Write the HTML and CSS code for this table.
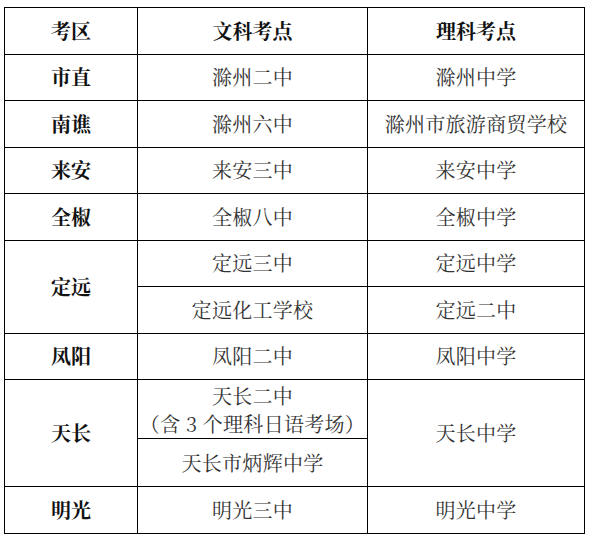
FILE: index.html
```html
<!DOCTYPE html>
<html lang="zh">
<head>
<meta charset="utf-8">
<link rel="stylesheet" href="styles.css">
</head>
<body>
<table class="grid">
  <colgroup>
    <col class="c1"><col class="c2"><col class="c3">
  </colgroup>
  <tr class="r"><th>考区</th><th>文科考点</th><th>理科考点</th></tr>
  <tr class="r"><th>市直</th><td>滁州二中</td><td>滁州中学</td></tr>
  <tr class="r"><th>南谯</th><td>滁州六中</td><td>滁州市旅游商贸学校</td></tr>
  <tr class="r"><th>来安</th><td>来安三中</td><td>来安中学</td></tr>
  <tr class="r"><th>全椒</th><td>全椒八中</td><td>全椒中学</td></tr>
  <tr class="r"><th rowspan="2">定远</th><td>定远三中</td><td>定远中学</td></tr>
  <tr class="r"><td>定远化工学校</td><td>定远二中</td></tr>
  <tr class="r"><th>凤阳</th><td>凤阳二中</td><td>凤阳中学</td></tr>
  <tr class="tall"><th rowspan="2">天长</th><td class="two">天长二中<br>（含 3 个理科日语考场）</td><td rowspan="2">天长中学</td></tr>
  <tr class="r2"><td>天长市炳辉中学</td></tr>
  <tr class="r"><th>明光</th><td>明光三中</td><td>明光中学</td></tr>
</table>
</body>
</html>
```
FILE: styles.css
```css
html, body {
  margin: 0;
  padding: 0;
  background: #fff;
}
body {
  padding: 7px 0 0 4px;
  font-family: "Noto Serif CJK SC", "Noto Sans CJK SC", serif;
}
.grid {
  border-collapse: collapse;
  table-layout: fixed;
  width: 580px;
}
.c1 { width: 133px; }
.c2 { width: 230px; }
.c3 { width: 217px; }
.grid th, .grid td {
  border: 1px solid #000;
  padding: 0;
  text-align: center;
  vertical-align: middle;
  font-size: 20px;
  line-height: 28px;
}
.grid th {
  font-weight: 700;
  color: #111;
}
.grid td {
  font-weight: 400;
  color: #333;
  letter-spacing: 0.3px;
}
.r { height: 46.5px; }
.tall { height: 59px; }
.r2 { height: 48px; }
.grid td.two {
  line-height: 28px;
  padding-top: 1px;
}
```
